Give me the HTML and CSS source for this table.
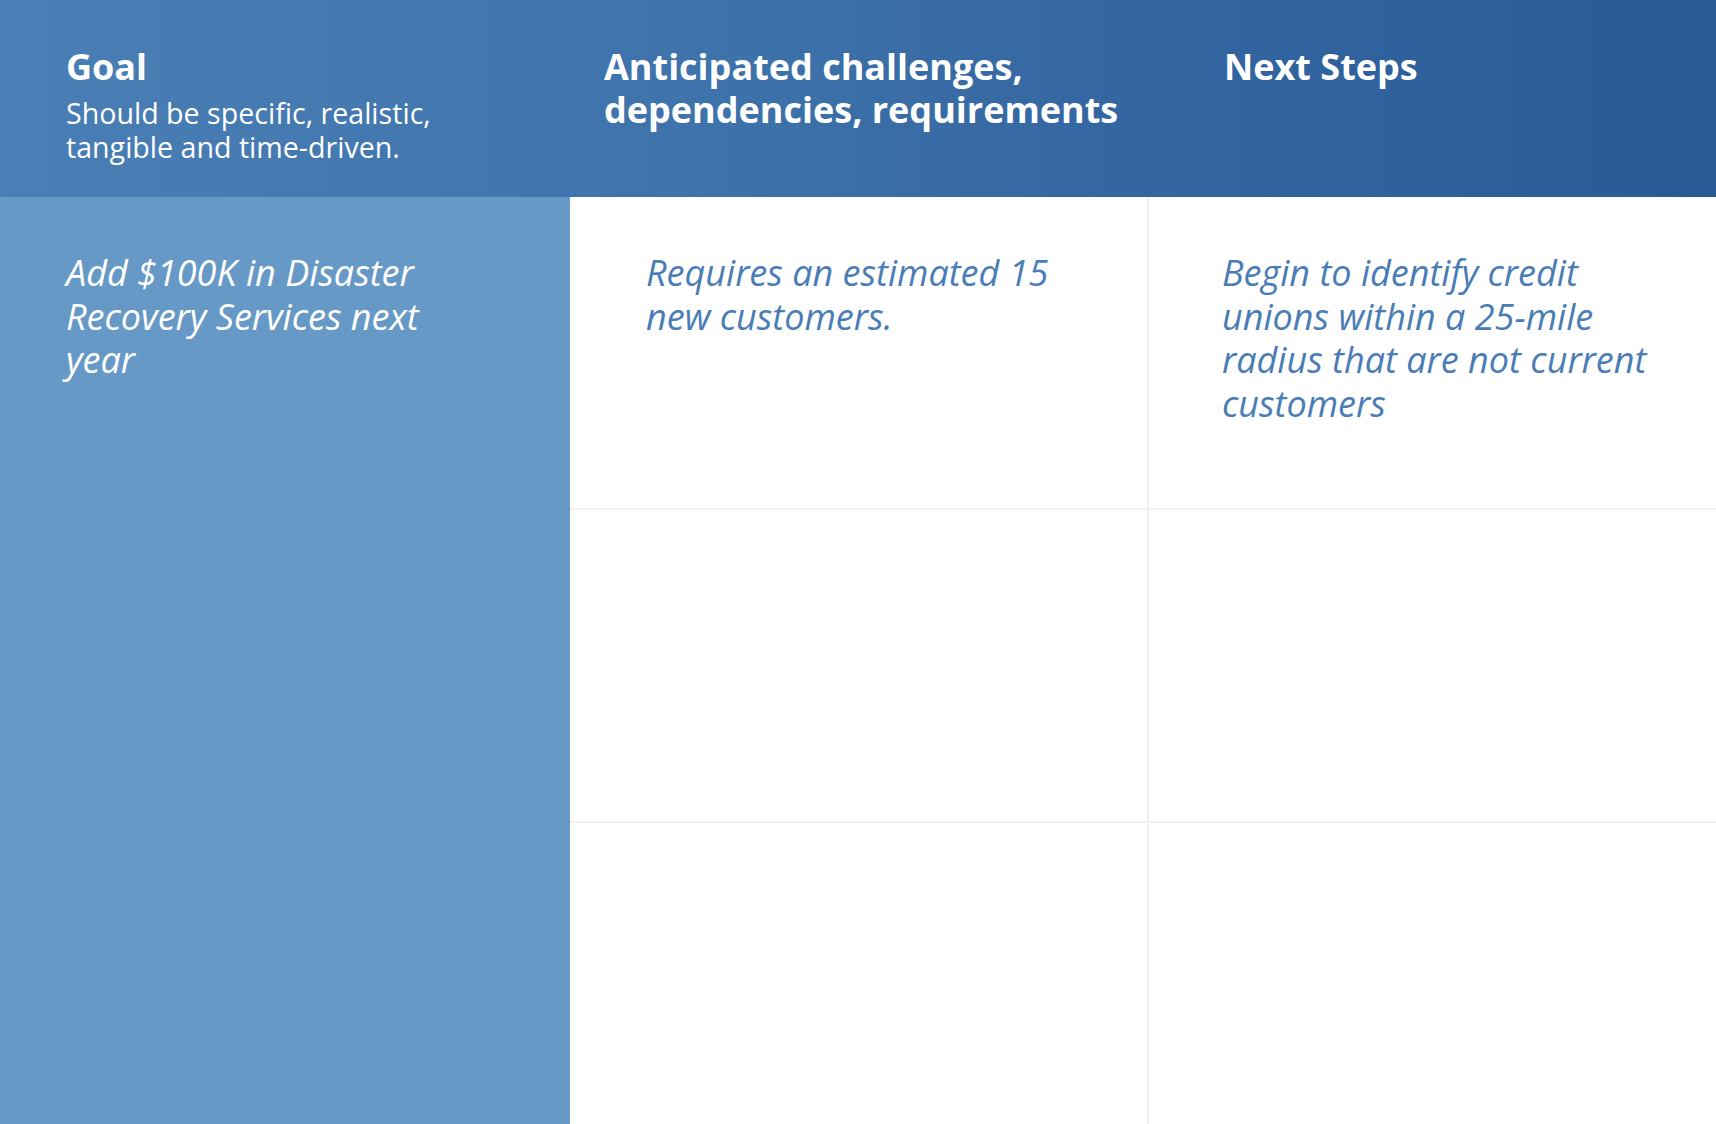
FILE: index.html
```html
<!DOCTYPE html>
<html lang="en">
<head>
<meta charset="utf-8">
<title>Goal planning</title>
<link rel="stylesheet" href="styles.css">
</head>
<body>
<div class="page">
  <div class="header">
    <div class="hcell hcell-goal">
      <div class="htitle">Goal</div>
      <div class="hsub">Should be specific, realistic,<br>tangible and time-driven.</div>
    </div>
    <div class="hcell hcell-chal">
      <div class="htitle">Anticipated challenges,<br>dependencies, requirements</div>
    </div>
    <div class="hcell hcell-next">
      <div class="htitle">Next Steps</div>
    </div>
  </div>
  <div class="body">
    <div class="goal">
      <p class="goal-text">Add $100K in Disaster<br>Recovery Services next<br>year</p>
    </div>
    <div class="cell cell-chal"><p class="cell-text">Requires an estimated 15<br>new customers.</p></div>
    <div class="cell cell-next"><p class="cell-text">Begin to identify credit<br>unions within a 25-mile<br>radius that are not current<br>customers</p></div>
    <div class="cell cell-chal"></div>
    <div class="cell cell-next"></div>
    <div class="cell cell-chal"></div>
    <div class="cell cell-next"></div>
  </div>
</div>
</body>
</html>
```
FILE: styles.css
```css
html, body {
  margin: 0;
  padding: 0;
  background: #ffffff;
}
body {
  font-family: "Open Sans", "Liberation Sans", sans-serif;
  width: 1716px;
  height: 1124px;
  overflow: hidden;
}
.page {
  width: 1716px;
}
.header {
  display: grid;
  grid-template-columns: 570px 579px 1fr;
  height: 197px;
  background: linear-gradient(90deg, #4a7fb6 0%, #3f73ab 40%, #3467a1 65%, #295a96 100%);
  color: #ffffff;
}
.hcell {
  padding-top: 45px;
  box-sizing: border-box;
}
.hcell-goal { padding-left: 66px; }
.hcell-chal { padding-left: 34px; }
.hcell-next { padding-left: 75px; }
.htitle {
  font-weight: 700;
  font-size: 36px;
  line-height: 43px;
}
.hsub {
  margin-top: 8px;
  font-size: 28.6px;
  line-height: 34px;
  font-weight: 400;
}
.body {
  display: grid;
  grid-template-columns: 570px 579px 1fr;
  grid-template-rows: 313px 313px 313px;
}
.goal {
  grid-row: 1 / span 3;
  grid-column: 1;
  background: #6699c5;
  padding: 54px 0 0 66px;
  box-sizing: border-box;
}
.goal-text {
  margin: 0;
  color: #ffffff;
  font-style: italic;
  font-size: 36px;
  line-height: 43.5px;
}
.cell {
  box-sizing: border-box;
  border-bottom: 2px solid #eff1f4;
  padding-top: 54px;
}
.cell-chal {
  grid-column: 2;
  padding-left: 76px;
  border-right: 2px solid #eff1f4;
}
.cell-next {
  grid-column: 3;
  padding-left: 73px;
}
.cell-text {
  margin: 0;
  color: #4a7db5;
  font-style: italic;
  font-size: 36px;
  line-height: 43.5px;
}
```
